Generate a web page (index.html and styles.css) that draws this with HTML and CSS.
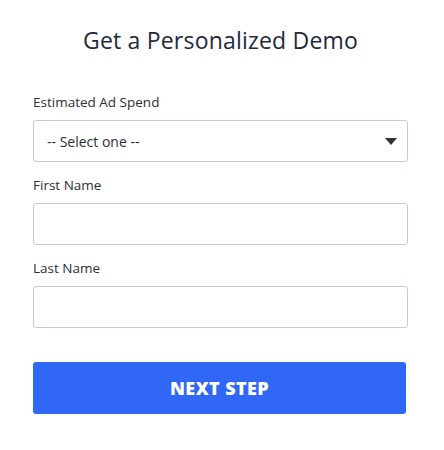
FILE: index.html
```html
<!DOCTYPE html>
<html lang="en">
<head>
  <meta charset="UTF-8" />
  <meta name="viewport" content="width=device-width, initial-scale=1.0"/>
  <title>Get a Personalized Demo</title>
  <link rel="stylesheet" href="styles.css">
</head>
<body>
  <h1>Get a Personalized Demo</h1>
  <form id="form">
    <label>Estimated Ad Spend</label>
    <div class="select-wrap">
      <select name="ad_spend">
        <option>-- Select one --</option>
        <option>Under $10k / month</option>
        <option>$10k - $50k / month</option>
        <option>$50k+ / month</option>
      </select>
      <span class="arrow"></span>
    </div>

    <label>First Name</label>
    <input name="first_name" />

    <label>Last Name</label>
    <input name="last_name" />

    <button type="submit">NEXT STEP</button>
  </form>
</body>
</html>
```

FILE: styles.css
```css
body {
  font-family: "Open Sans", Arial, sans-serif;
  background: #fff;
  margin: 0;
  padding: 0 33px;
  width: 375px;
}
h1 {
  text-align: center;
  color: #1e2a3b;
  font-size: 23px;
  font-weight: 400;
  letter-spacing: 0.2px;
  line-height: 28px;
  margin: 26px 0 40px;
}
label {
  display: block;
  font-size: 13.5px;
  line-height: 16px;
  color: #2b2f33;
  margin: 15px 0 10px;
}
label:first-child {
  margin-top: 0;
}
input, select {
  display: block;
  box-sizing: border-box;
  width: 100%;
  height: 42px;
  padding: 0 13px;
  border: 1px solid #c3ccd4;
  border-radius: 3px;
  background: #fff;
  font-family: inherit;
  font-size: 14px;
  color: #2b2f33;
}
select {
  appearance: none;
  -webkit-appearance: none;
}
.select-wrap {
  position: relative;
}
.arrow {
  position: absolute;
  right: 11px;
  top: 18px;
  border-left: 6px solid transparent;
  border-right: 6px solid transparent;
  border-top: 7px solid #333;
  pointer-events: none;
}
button {
  display: block;
  width: 373px;
  height: 52px;
  margin-top: 34px;
  background-color: #3068f5;
  color: #fff;
  border: none;
  border-radius: 3px;
  font-family: inherit;
  font-size: 18px;
  font-weight: 800;
  letter-spacing: 0.4px;
}
```
